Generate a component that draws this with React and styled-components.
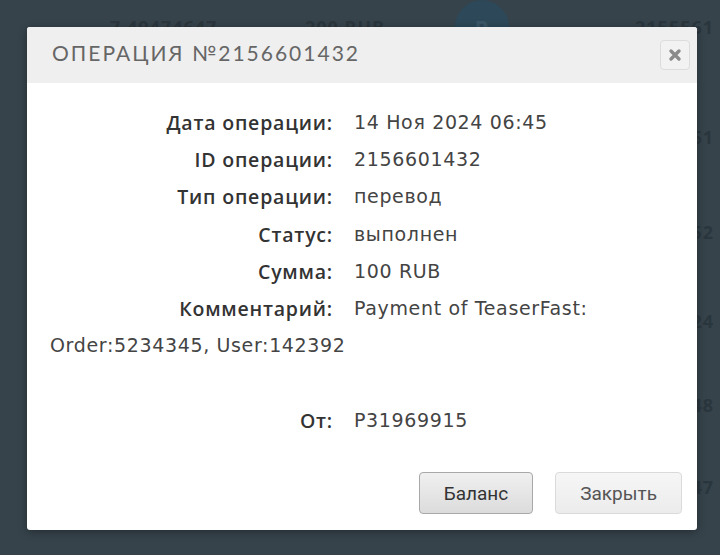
import React from "react";
import styled, { createGlobalStyle } from "styled-components";

const GlobalStyle = createGlobalStyle`
  html, body {
    margin: 0;
    padding: 0;
    background: #36434b;
    width: 720px;
    height: 555px;
    overflow: hidden;
  }
`;

const rows = [
  { id: "7 49474647", sum: "200 RUB", op: "2155561", h: 44, avatar: true },
  { id: "", sum: "", op: "", h: 44 },
  { id: "", sum: "", op: "2155561", h: 98 },
  { id: "", sum: "", op: "2155652", h: 92 },
  { id: "", sum: "", op: "2155524", h: 86 },
  { id: "", sum: "", op: "2155548", h: 82 },
  { id: "", sum: "", op: "2155547", h: 82 },
];

const details = [
  ["Дата операции:", "14 Ноя 2024 06:45"],
  ["ID операции:", "2156601432"],
  ["Тип операции:", "перевод"],
  ["Статус:", "выполнен"],
  ["Сумма:", "100 RUB"],
  ["Комментарий:", "Payment of TeaserFast: Order:5234345, User:142392"],
];

const App = () => {
  return (
    <Page>
      <GlobalStyle />
      <Table>
        {rows.map((r, i) => (
          <BgRow key={i} $h={r.h}>
            <BgCell>{r.id}</BgCell>
            <BgCell>{r.sum}</BgCell>
            <BgCell>{r.avatar && <Avatar>Р</Avatar>}</BgCell>
            <BgCell>{r.op}</BgCell>
          </BgRow>
        ))}
      </Table>

      <Modal>
        <Header>
          <Title>Операция №2156601432</Title>
          <CloseBtn aria-label="close">
            <svg width="14" height="14" viewBox="0 0 14 14">
              <path
                d="M3 3 L11 11 M11 3 L3 11"
                stroke="#8a8a8a"
                strokeWidth="3.4"
                strokeLinecap="round"
              />
            </svg>
          </CloseBtn>
        </Header>
        <Body>
          {details.map(([label, value]) => (
            <Line key={label}>
              <Label>{label}</Label>
              {value}
            </Line>
          ))}
          <Line $gap>
            <Label>От:</Label>
            P31969915
          </Line>
        </Body>
        <Footer>
          <Button $primary>Баланс</Button>
          <Button>Закрыть</Button>
        </Footer>
      </Modal>
    </Page>
  );
};

const Page = styled.div`
  position: relative;
  width: 720px;
  height: 555px;
  overflow: hidden;
  font-family: "Open Sans", "Noto Sans", sans-serif;
`;

const Table = styled.div`
  display: flex;
  flex-direction: column;
`;

const BgRow = styled.div`
  display: grid;
  grid-template-columns: 195px 154px 176px 1fr;
  align-items: center;
  height: ${(p) => p.$h}px;
  padding-left: 110px;
`;

const BgCell = styled.div`
  color: #2a363d;
  font-size: 18px;
  letter-spacing: 1px;
  font-weight: 700;
  white-space: nowrap;
`;

const Avatar = styled.div`
  width: 54px;
  height: 54px;
  margin-left: -4px;
  border-radius: 50%;
  background: #2d4858;
  color: #3a5666;
  display: flex;
  align-items: center;
  justify-content: center;
  font-size: 22px;
  font-weight: 700;
`;

const Modal = styled.div`
  position: absolute;
  left: 27px;
  top: 27px;
  width: 670px;
  height: 503px;
  background: #ffffff;
  border-radius: 3px;
  box-shadow: 0 2px 8px rgba(0, 0, 0, 0.35);
  display: flex;
  flex-direction: column;
  overflow: hidden;
`;

const Header = styled.div`
  height: 56px;
  background: #efefef;
  display: flex;
  align-items: center;
  justify-content: space-between;
  padding: 0 7px 0 25px;
`;

const Title = styled.div`
  font-family: "Lato", "Open Sans", sans-serif;
  text-transform: uppercase;
  font-size: 21px;
  letter-spacing: 2px;
  color: #666;
  margin-top: -5px;
`;

const CloseBtn = styled.button`
  width: 30px;
  height: 30px;
  padding: 0;
  border: 1px solid #dcdcdc;
  border-radius: 4px;
  background: #f2f2f2;
  display: flex;
  align-items: center;
  justify-content: center;
`;

const Body = styled.div`
  flex: 1;
  padding: 21px 24px 0 23px;
  font-family: "DejaVu Sans", "Open Sans", sans-serif;
  font-size: 19px;
  letter-spacing: 0.65px;
  color: #444;
`;

const Line = styled.div`
  line-height: 37.2px;
  margin-top: ${(p) => (p.$gap ? "38px" : "0")};
`;

const Label = styled.span`
  display: inline-block;
  vertical-align: top;
  width: 283px;
  margin-right: 21px;
  text-align: right;
  font-family: "Open Sans", "Noto Sans", sans-serif;
  font-size: 19.5px;
  line-height: 37.2px;
  letter-spacing: 0.8px;
  font-weight: 600;
  color: #333;
`;

const Footer = styled.div`
  display: flex;
  justify-content: flex-end;
  gap: 22px;
  padding: 0 15px 16px 0;
`;

const Button = styled.button`
  height: 42px;
  padding: 0 24px;
  font-family: Roboto, "Liberation Sans", sans-serif;
  font-size: 19px;
  border-radius: 4px;
  color: ${(p) => (p.$primary ? "#333" : "#555")};
  border: 1px solid ${(p) => (p.$primary ? "#a8a8a8" : "#dadada")};
  background: ${(p) =>
    p.$primary
      ? "linear-gradient(#f0f0f0, #dcdcdc)"
      : "linear-gradient(#f6f6f6, #ececec)"};
`;

export default App;
